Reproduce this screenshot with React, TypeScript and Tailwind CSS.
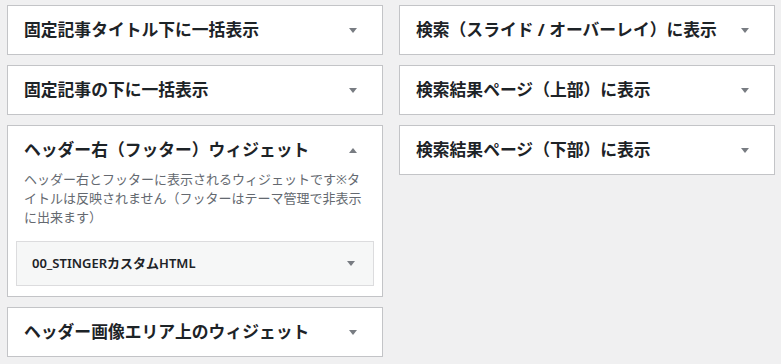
import React from "react";

const font = "font-['Noto_Sans','Noto_Sans_CJK_JP',sans-serif]";

const Arrow = ({ up = false }: { up?: boolean }) => (
  <svg width="8" height="5" viewBox="0 0 8 5" className="shrink-0">
    <polygon points={up ? "0,5 8,5 4,0" : "0,0 8,0 4,5"} fill="#787c82" />
  </svg>
);

const SidebarBox = ({ title }: { title: string }) => (
  <div className="border border-[#c3c4c7] bg-white">
    <div className="flex h-12 items-center justify-between pl-4 pr-[25px]">
      <h2 className="text-[16.8px] font-bold text-[#1d2327] whitespace-nowrap">{title}</h2>
      <Arrow />
    </div>
  </div>
);

const OpenBox = () => (
  <div className="border border-[#c3c4c7] bg-white pb-[10px]">
    <div className="flex h-12 items-center justify-between pl-4 pr-[25px]">
      <h2 className="text-[16.8px] font-bold text-[#1d2327] whitespace-nowrap">
        ヘッダー右（フッター）ウィジェット
      </h2>
      <Arrow up />
    </div>
    <p className="-mt-1 px-4 text-[13px] leading-[19px] text-[#646970]">
      ヘッダー右とフッターに表示されるウィジェットです※タイトルは反映されません（フッターはテーマ管理で非表示に出来ます）
    </p>
    <div className="mx-2 mt-[14px] flex h-[45px] items-center justify-between border border-[#dcdcde] bg-[#f6f7f7] pl-[15px] pr-[18px]">
      <span className="text-[13px] font-semibold text-[#1d2327]">00_STINGERカスタムHTML</span>
      <Arrow />
    </div>
  </div>
);

export default function App() {
  return (
    <div className={`${font} min-h-screen bg-[#f0f0f1] pl-[7px] pt-[5px]`}>
      <div className="flex gap-[16px]">
        <div className="flex w-[376px] flex-col gap-[10px]">
          <SidebarBox title="固定記事タイトル下に一括表示" />
          <SidebarBox title="固定記事の下に一括表示" />
          <OpenBox />
          <SidebarBox title="ヘッダー画像エリア上のウィジェット" />
        </div>
        <div className="flex w-[376px] flex-col gap-[10px]">
          <SidebarBox title="検索（スライド / オーバーレイ）に表示" />
          <SidebarBox title="検索結果ページ（上部）に表示" />
          <SidebarBox title="検索結果ページ（下部）に表示" />
        </div>
      </div>
    </div>
  );
}
